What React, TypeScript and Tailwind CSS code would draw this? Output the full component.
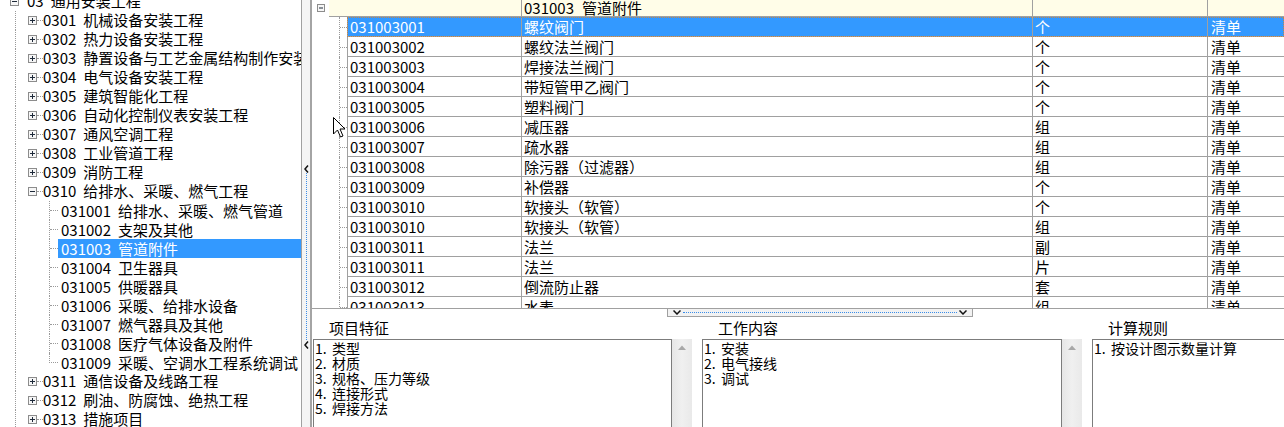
import React from "react";

type TreeItem = {
  lvl: number;
  code: string;
  name: string;
  open?: boolean;
  last?: boolean;
  sel?: boolean;
};

const tree: TreeItem[] = [
  { lvl: 0, code: "03", name: "通用安装工程", open: true },
  { lvl: 1, code: "0301", name: "机械设备安装工程" },
  { lvl: 1, code: "0302", name: "热力设备安装工程" },
  { lvl: 1, code: "0303", name: "静置设备与工艺金属结构制作安装工程" },
  { lvl: 1, code: "0304", name: "电气设备安装工程" },
  { lvl: 1, code: "0305", name: "建筑智能化工程" },
  { lvl: 1, code: "0306", name: "自动化控制仪表安装工程" },
  { lvl: 1, code: "0307", name: "通风空调工程" },
  { lvl: 1, code: "0308", name: "工业管道工程" },
  { lvl: 1, code: "0309", name: "消防工程" },
  { lvl: 1, code: "0310", name: "给排水、采暖、燃气工程", open: true },
  { lvl: 2, code: "031001", name: "给排水、采暖、燃气管道" },
  { lvl: 2, code: "031002", name: "支架及其他" },
  { lvl: 2, code: "031003", name: "管道附件", sel: true },
  { lvl: 2, code: "031004", name: "卫生器具" },
  { lvl: 2, code: "031005", name: "供暖器具" },
  { lvl: 2, code: "031006", name: "采暖、给排水设备" },
  { lvl: 2, code: "031007", name: "燃气器具及其他" },
  { lvl: 2, code: "031008", name: "医疗气体设备及附件" },
  { lvl: 2, code: "031009", name: "采暖、空调水工程系统调试", last: true },
  { lvl: 1, code: "0311", name: "通信设备及线路工程" },
  { lvl: 1, code: "0312", name: "刷油、防腐蚀、绝热工程" },
  { lvl: 1, code: "0313", name: "措施项目" },
];

const rows = [
  ["031003001", "螺纹阀门", "个"],
  ["031003002", "螺纹法兰阀门", "个"],
  ["031003003", "焊接法兰阀门", "个"],
  ["031003004", "带短管甲乙阀门", "个"],
  ["031003005", "塑料阀门", "个"],
  ["031003006", "减压器", "组"],
  ["031003007", "疏水器", "组"],
  ["031003008", "除污器（过滤器）", "组"],
  ["031003009", "补偿器", "个"],
  ["031003010", "软接头（软管）", "个"],
  ["031003010", "软接头（软管）", "组"],
  ["031003011", "法兰", "副"],
  ["031003011", "法兰", "片"],
  ["031003012", "倒流防止器", "套"],
  ["031003013", "水表", "组"],
];

function ExpandBox({ open, size = 9 }: { open?: boolean; size?: number }) {
  const m = size / 2;
  return (
    <svg width={size} height={size} viewBox={`0 0 ${size} ${size}`} className="shrink-0">
      <rect x="0.5" y="0.5" width={size - 1} height={size - 1} fill="#f6f6f6" stroke="#8c8c8c" />
      <path d={`M2 ${m}h${size - 4}`} stroke="#1e2a3a" />
      {!open && <path d={`M${m} 2v${size - 4}`} stroke="#1e2a3a" />}
    </svg>
  );
}

function TreeRow({ item }: { item: TreeItem }) {
  const label = (
    <>
      <span>{item.code}</span>
      <span className="ml-[7px]">{item.name}</span>
    </>
  );

  if (item.lvl === 0) {
    return (
      <div className="flex items-center h-[19px] pl-[10px] whitespace-nowrap">
        <ExpandBox open />
        <span className="ml-[8px]">{label}</span>
      </div>
    );
  }

  if (item.lvl === 1) {
    return (
      <div className="flex items-center h-[19px] whitespace-nowrap">
        <div className="w-[15px] shrink-0" />
        <div className="w-[13px] h-full shrink-0 border-l border-dotted border-[#9a9a9a]" />
        <ExpandBox open={item.open} />
        <div className="w-[6px] shrink-0 border-t border-dotted border-[#9a9a9a]" />
        <span>{label}</span>
      </div>
    );
  }

  return (
    <div className="flex items-center h-[19px] whitespace-nowrap">
      <div className="w-[15px] shrink-0" />
      <div className="w-[34px] h-full shrink-0 border-l border-dotted border-[#9a9a9a]" />
      {item.last ? (
        <div className="w-[9px] h-[10px] self-start shrink-0 border-l border-b border-dotted border-[#9a9a9a]" />
      ) : (
        <div className="w-[9px] h-full shrink-0 border-l border-dotted border-[#9a9a9a] flex items-center">
          <div className="w-full border-t border-dotted border-[#9a9a9a]" />
        </div>
      )}
      <span className={`flex-1 h-full pl-[3px] leading-[19px] ${item.sel ? "bg-[#3399ff] text-white" : ""}`}>
        {label}
      </span>
    </div>
  );
}

function Cell({ w, children }: { w: string; children?: React.ReactNode }) {
  return (
    <div className={`${w} shrink-0 h-full border-l border-b border-[#a0a0a0] pl-[2px] leading-[19px] whitespace-nowrap overflow-hidden`}>
      {children}
    </div>
  );
}

function UpArrowBar() {
  return (
    <div className="w-[20px] shrink-0 bg-gradient-to-r from-[#e6e6e6] via-[#f0f0f0] to-[#e9e9e9] flex justify-center pt-[6px]">
      <svg width="8" height="5" viewBox="0 0 8 5">
        <path d="M0 5 L4 0.5 L8 5 Z" fill="#a8a8a8" />
      </svg>
    </div>
  );
}

function TextBox({ lines }: { lines: string[] }) {
  return (
    <div className="flex-1 border-t border-l border-r border-[#7c7c7c] pt-[1px] pl-[1px] text-[14px] leading-[15px] whitespace-nowrap overflow-hidden">
      {lines.map((l, i) => (
        <div key={i}>
          <span className="inline-block w-[17px]">{i + 1}.</span>
          {l}
        </div>
      ))}
    </div>
  );
}

export default function App() {
  return (
    <div className="relative w-[1284px] h-[427px] overflow-hidden bg-white flex text-black text-[15px] font-['Noto_Sans_CJK_SC',sans-serif]">
      {/* Tree */}
      <div className="w-[302px] shrink-0 border-r border-[#a0a0a0] overflow-hidden">
        <div className="-mt-[8px]">
          {tree.map((t, i) => (
            <TreeRow key={i} item={t} />
          ))}
        </div>
      </div>

      {/* Vertical splitter */}
      <div className="w-[10px] shrink-0 bg-[#f4f4f4] border-r-2 border-[#a4a4a4] flex flex-col items-center">
        <div className="h-[165px]" />
        <svg width="5" height="8" viewBox="0 0 5 8" className="shrink-0">
          <path d="M4 0.5 L1 4 L4 7.5" fill="none" stroke="#111" strokeWidth="1.5" />
        </svg>
        <div className="h-[167px] border-l border-dotted border-[#3b8de8]" />
        <svg width="5" height="8" viewBox="0 0 5 8" className="shrink-0 mt-[1px]">
          <path d="M4 0.5 L1 4 L4 7.5" fill="none" stroke="#111" strokeWidth="1.5" />
        </svg>
      </div>

      {/* Right pane */}
      <div className="flex-1 flex flex-col min-w-0">
        {/* Grid */}
        <div className="h-[309px] shrink-0 border-b border-[#a0a0a0] overflow-hidden">
          <div className="flex h-[17px]">
            <div className="w-[17px] shrink-0 pl-[5px] pt-[4px]">
              <ExpandBox open size={8} />
            </div>
            <div className="flex flex-1 bg-[#fffde8] border-b border-[#a0a0a0]">
              <div className="w-[192px] shrink-0" />
              <div className="w-[511px] shrink-0 border-l border-[#a0a0a0] pl-[2px] leading-[16px] whitespace-nowrap">
                031003<span className="ml-[8px]">管道附件</span>
              </div>
              <div className="w-[175px] shrink-0 border-l border-[#a0a0a0]" />
              <div className="flex-1 border-l border-[#a0a0a0]" />
            </div>
          </div>

          {rows.map((r, i) => {
            const sel = i === 0;
            return (
              <div key={i} className="flex h-[20px]">
                <div className="w-[35px] shrink-0 pl-[27px] flex">
                  <div className="w-[8px] h-full border-l border-dotted border-[#9a9a9a] flex items-center">
                    <div className="w-full border-t border-dotted border-[#9a9a9a]" />
                  </div>
                </div>
                <div
                  className={`flex flex-1 ${
                    sel ? "bg-[#3399ff] text-white outline outline-1 outline-dotted outline-[#c0864a] -outline-offset-1" : ""
                  }`}
                >
                  <Cell w="w-[174px]">{r[0]}</Cell>
                  <Cell w="w-[511px]">{r[1]}</Cell>
                  <Cell w="w-[175px]">{r[2]}</Cell>
                  <div className="flex-1 h-full border-l border-b border-[#a0a0a0] pl-[3px] leading-[19px] whitespace-nowrap">
                    清单
                  </div>
                </div>
              </div>
            );
          })}
        </div>

        {/* Horizontal splitter */}
        <div className="h-[8px] shrink-0">
          <div className="ml-[355px] w-[306px] h-[8px] border border-t-0 border-[#a0a0a0] bg-[#f2f2f2] flex items-center px-[5px] gap-[2px]">
            <svg width="8" height="5" viewBox="0 0 8 5" className="shrink-0">
              <path d="M0.5 0.5 L4 4 L7.5 0.5" fill="none" stroke="#111" strokeWidth="1.5" />
            </svg>
            <div className="flex-1 border-t border-dotted border-[#3b8de8]" />
            <svg width="8" height="5" viewBox="0 0 8 5" className="shrink-0">
              <path d="M0.5 0.5 L4 4 L7.5 0.5" fill="none" stroke="#111" strokeWidth="1.5" />
            </svg>
          </div>
        </div>

        {/* Bottom panels */}
        <div className="flex-1 flex min-h-0">
          <div className="w-[390px] shrink-0 flex flex-col">
            <div className="h-[22px] pl-[17px] leading-[22px]">项目特征</div>
            <div className="flex-1 flex pl-[1px] pr-[10px]">
              <TextBox lines={["类型", "材质", "规格、压力等级", "连接形式", "焊接方法"]} />
              <UpArrowBar />
            </div>
          </div>
          <div className="w-[390px] shrink-0 flex flex-col">
            <div className="h-[22px] pl-[16px] leading-[22px]">工作内容</div>
            <div className="flex-1 flex pr-[10px]">
              <TextBox lines={["安装", "电气接线", "调试"]} />
              <UpArrowBar />
            </div>
          </div>
          <div className="flex-1 flex flex-col min-w-0">
            <div className="h-[22px] pl-[16px] leading-[22px]">计算规则</div>
            <div className="flex-1 flex border-t border-l border-[#7c7c7c] pt-[1px] pl-[1px] text-[14px] leading-[15px] whitespace-nowrap">
              <div>
                <span className="inline-block w-[17px]">1.</span>按设计图示数量计算
              </div>
            </div>
          </div>
        </div>
      </div>

      {/* Mouse pointer */}
      <svg width="13" height="21" viewBox="0 0 13 21" className="absolute left-[333px] top-[117px]">
        <path d="M0.5 0.5 L0.5 17 L4.5 13 L7.5 20 L10 19 L7 12 L12 12 Z" fill="#fff" stroke="#000" />
      </svg>
    </div>
  );
}
